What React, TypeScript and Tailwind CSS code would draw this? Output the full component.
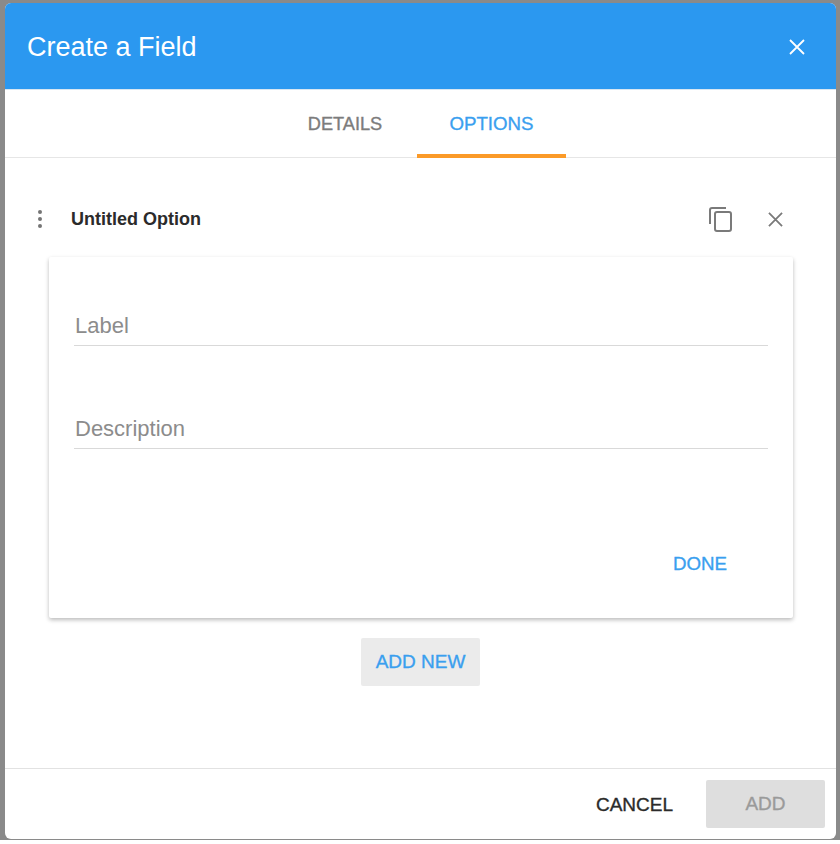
function CloseIcon({ size, stroke }: { size: number; stroke: number }) {
  return (
    <svg width={size} height={size} viewBox="0 0 16 16" fill="none" stroke="currentColor" strokeWidth={stroke}>
      <path d="M1 1l14 14M15 1L1 15" />
    </svg>
  );
}

function OptionField({ label }: { label: string }) {
  return (
    <div className="h-[41px] border-b border-[#d9d9d9] pl-px text-[22px] leading-[30px] pt-[6px] text-[#8c8c8c]">
      {label}
    </div>
  );
}

export default function App() {
  return (
    <div className="w-[840px] h-[844px] bg-white font-['Liberation_Sans',Arial,sans-serif]">
      <div className="h-[840px] bg-[#8a8a8a] pt-[3px] pl-[5px] pr-[4px]">
        <div className="h-[836px] bg-white rounded-[6px] overflow-hidden flex flex-col">
          {/* header */}
          <div className="h-[87px] shrink-0 bg-[#2b98f0] border-b border-[#d8e6f2] flex items-center justify-between pl-[22px] pr-[31px] pt-[2px]">
            <h1 className="text-[27px] text-white font-normal">Create a Field</h1>
            <button className="text-white">
              <CloseIcon size={16} stroke={1.8} />
            </button>
          </div>

          {/* tabs */}
          <div className="h-[68px] shrink-0 border-b border-[#e6e6e6] flex justify-center pr-[4px]">
            <div className="w-[146px] flex items-center justify-center pt-[2px] pl-[2px] text-[18.2px] text-[#7c7c7c] [-webkit-text-stroke:0.35px_#7c7c7c]">
              DETAILS
            </div>
            <div className="w-[149px] flex items-center justify-center text-[18.7px] text-[#3a9fef] [-webkit-text-stroke:0.35px_#3a9fef] border-b-4 border-[#fb9a28] pt-[4px] h-[68px] -mb-px">
              OPTIONS
            </div>
          </div>

          {/* body */}
          <div className="flex-1 flex flex-col">
            <div className="h-[99px] flex items-center pl-[31px] pr-[53px] pt-[23px]">
              <svg width="8" height="20" viewBox="0 0 8 20" className="shrink-0">
                <circle cx="4" cy="3" r="2" fill="#757575" />
                <circle cx="4" cy="10" r="2" fill="#757575" />
                <circle cx="4" cy="17" r="2" fill="#757575" />
              </svg>
              <span className="ml-[27px] text-[18px] font-bold text-[#2b2b2b]">Untitled Option</span>
              <div className="ml-auto flex items-center gap-[36px] text-[#7a7a7a]">
                <svg width="23" height="25" viewBox="0 0 23 25" fill="none" stroke="currentColor" strokeWidth="2">
                  <path d="M17 1H3a2 2 0 0 0-2 2v14" />
                  <rect x="6" y="5" width="16" height="19" rx="2" />
                </svg>
                <CloseIcon size={15} stroke={1.9} />
              </div>
            </div>

            {/* option card */}
            <div className="ml-[44px] mr-[43px] h-[361px] bg-white rounded-[2px] shadow-[0_2px_4px_rgba(0,0,0,0.27)] px-[25px] flex flex-col">
              <div className="pt-[48px] flex flex-col gap-[62px]">
                <OptionField label="Label" />
                <OptionField label="Description" />
              </div>
              <div className="mt-auto pb-[40px] pr-[41px] flex justify-end text-[18.7px] text-[#3a9fef] [-webkit-text-stroke:0.35px_#3a9fef]">
                DONE
              </div>
            </div>

            <div className="mt-[20px] flex justify-center">
              <button className="w-[119px] h-[48px] bg-[#ebebeb] rounded-[2px] text-[19px] text-[#3a9fef] [-webkit-text-stroke:0.35px_#3a9fef]">
                ADD NEW
              </button>
            </div>
          </div>

          {/* footer */}
          <div className="h-[71px] shrink-0 border-t border-[#e2e2e2] flex items-center justify-end pr-[11px]">
            <button className="text-[19px] text-[#2b2b2b] [-webkit-text-stroke:0.35px_#2b2b2b] mr-[33px] pt-[2px]">CANCEL</button>
            <button className="w-[119px] h-[48px] bg-[#dedede] rounded-[2px] text-[19px] text-[#9a9a9a] [-webkit-text-stroke:0.35px_#9a9a9a]">
              ADD
            </button>
          </div>
        </div>
      </div>
    </div>
  );
}
